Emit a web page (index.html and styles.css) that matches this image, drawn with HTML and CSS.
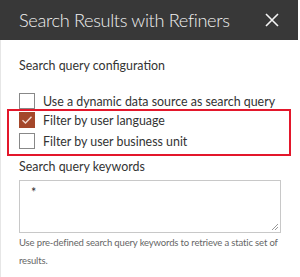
FILE: index.html
```html
<!DOCTYPE html>
<html>
  <head>
    <title>Search Results with Refiners</title>
    <link rel="stylesheet" href="styles.css">
  </head>
  <body>
    <div class="panel">
      <div class="header">
        <h1 class="title">Search Results with Refiners</h1>
        <svg class="close" width="14" height="14" viewBox="0 0 14 14">
          <path d="M1 1 L13 13 M13 1 L1 13" stroke="#f4f4f4" stroke-width="1.6" fill="none" />
        </svg>
      </div>
      <div class="content">
        <div class="section-label">Search query configuration</div>

        <label class="check first">
          <span class="box"></span>
          <span class="check-text">Use a dynamic data source as search query</span>
        </label>

        <div class="highlight">
          <label class="check">
            <span class="box checked">
              <svg width="12" height="10" viewBox="0 0 12 10">
                <path d="M1.5 5.2 L4.5 8 L10.5 1.8" stroke="#f2d9d0" stroke-width="1.4" fill="none" />
              </svg>
            </span>
            <span class="check-text">Filter by user language</span>
          </label>
          <label class="check">
            <span class="box"></span>
            <span class="check-text">Filter by user business unit</span>
          </label>
        </div>

        <div class="field-label">Search query keywords</div>
        <div class="textarea">
          <span class="star">*</span>
          <svg class="grip" width="8" height="8" viewBox="0 0 8 8">
            <path d="M7 1 L1 7 M7 4 L4 7" stroke="#999" stroke-width="1" fill="none" />
          </svg>
        </div>
        <p class="help">Use pre-defined search query keywords to retrieve a static set of results.</p>
      </div>
    </div>
  </body>
</html>
```

FILE: styles.css
```css
body {
  margin: 0;
  font-family: Lato, "Noto Sans", sans-serif;
  background: #fff;
}

.panel {
  width: 298px;
  height: 277px;
  border-left: 1px solid #e6e6e6;
  box-sizing: border-box;
}

.header {
  height: 40px;
  background-color: #383838;
  display: flex;
  align-items: center;
  justify-content: space-between;
  padding: 0 19px 0 19px;
  margin-left: -1px;
}

.title {
  margin: 0 0 1px;
  font-size: 18.2px;
  font-weight: 300;
  letter-spacing: -0.35px;
  color: #f0f0f0;
  white-space: nowrap;
}

.close {
  display: block;
}

.content {
  padding: 0 18px;
}

.section-label {
  margin-top: 16px;
  font-size: 12.4px;
  color: #333;
  line-height: 20px;
}

.check {
  display: flex;
  align-items: center;
  height: 18px;
  font-size: 12.4px;
  color: #333;
  white-space: nowrap;
}

.check.first {
  margin-top: 16px;
}

.box {
  width: 14px;
  height: 14px;
  border: 1px solid #888;
  margin-right: 8px;
  display: flex;
  align-items: center;
  justify-content: center;
  flex-shrink: 0;
}

.box.checked {
  background-color: #a4472a;
  border-color: #a4472a;
}

.highlight {
  border: 2px solid #e3172b;
  margin: -1px -11px 0 -12px;
  padding: 0 0 4px 10px;
}

.highlight .check + .check {
  margin-top: 3px;
}

.field-label {
  margin-top: 1px;
  font-size: 12.4px;
  color: #333;
  line-height: 20px;
}

.textarea {
  position: relative;
  height: 51px;
  margin-top: 3px;
  margin-right: -1px;
  border: 1px solid #c8c8c8;
  font-size: 12.4px;
  color: #333;
}

.star {
  display: block;
  padding: 6px 0 0 11px;
  line-height: 12px;
}

.grip {
  position: absolute;
  right: 1px;
  bottom: 1px;
}

.help {
  margin: 1px 0 0;
  font-size: 9.5px;
  letter-spacing: -0.15px;
  line-height: 18px;
  color: #666;
}
```
